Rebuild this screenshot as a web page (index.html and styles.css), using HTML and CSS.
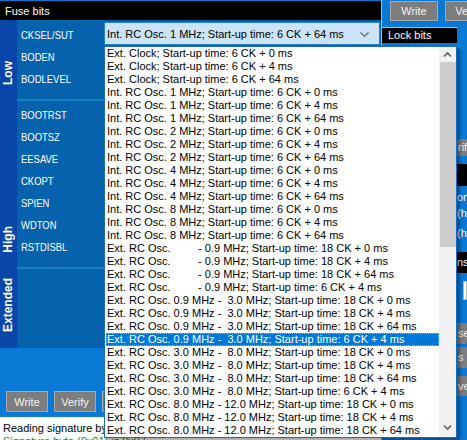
FILE: index.html
```html
<!DOCTYPE html>
<html>
<head>
<meta charset="utf-8">
<link rel="stylesheet" href="styles.css">
</head>
<body>
<div class="app">
  <div class="left">
    <div class="hdr">Fuse bits</div>
    <div class="fuse">
      <div class="sec">
        <div class="tab"><span>Low</span></div>
        <div class="body body-low">
          <div class="row"><span class="lbl"><span>CKSEL/SUT</span></span>
            <div class="combo"><span class="combo-txt">Int. RC Osc. 1 MHz; Start-up time: 6 CK + 64 ms</span>
              <svg class="chev" width="9" height="5" viewBox="0 0 9 5"><polyline points="0.5,0.5 4.5,4.3 8.5,0.5" fill="none" stroke="#5a5a5a" stroke-width="1.1"/></svg>
            </div>
          </div>
          <div class="row"><span class="lbl"><span>BODEN</span></span></div>
          <div class="row"><span class="lbl"><span>BODLEVEL</span></span></div>
        </div>
      </div>
      <div class="sec">
        <div class="tab"><span>High</span></div>
        <div class="body body-high">
          <div class="row"><span class="lbl"><span>BOOTRST</span></span></div>
          <div class="row"><span class="lbl"><span>BOOTSZ</span></span></div>
          <div class="row"><span class="lbl"><span>EESAVE</span></span></div>
          <div class="row"><span class="lbl"><span>CKOPT</span></span></div>
          <div class="row"><span class="lbl"><span>SPIEN</span></span></div>
          <div class="row"><span class="lbl"><span>WDTON</span></span></div>
          <div class="row"><span class="lbl"><span>RSTDISBL</span></span></div>
        </div>
      </div>
      <div class="sec">
        <div class="tab"><span>Extended</span></div>
        <div class="body body-ext"></div>
      </div>
    </div>
    <div class="actions">
      <button class="btn">Write</button>
      <button class="btn">Verify</button>
      <button class="btn">Read</button>
    </div>
    <div class="status">
      <div class="st-line">Reading signature byte (0x00) is 0x1E</div>
      <div class="st-line st-ok">Signature byte (0x01) is 0x07</div>
    </div>
  </div>

  <div class="right">
    <div class="rbtns">
      <button class="btn rbtn">Write</button>
      <button class="btn rbtn">Verify</button>
    </div>
    <div class="lockwrap">
      <div class="lockmain">
        <div class="lockhdr">Lock bits</div>
      </div>
      <div class="extra">
        <div class="x-gray x-b1">rify</div>
        <div class="x-black x-k1"></div>
        <div class="x-t x-t1">om</div>
        <div class="x-t x-t2">(he</div>
        <div class="x-t x-t3">(he</div>
        <div class="x-black x-k2">ns</div>
        <div class="x-white"></div>
        <div class="x-gray x-b2">se</div>
        <div class="x-gray x-b3">s (</div>
        <div class="x-gray x-b4">ve</div>
      </div>
    </div>
  </div>

  <div class="drop">
    <div class="items">
<div class="it">Ext. Clock; Start-up time: 6 CK + 0 ms</div>
<div class="it">Ext. Clock; Start-up time: 6 CK + 4 ms</div>
<div class="it">Ext. Clock; Start-up time: 6 CK + 64 ms</div>
<div class="it">Int. RC Osc. 1 MHz; Start-up time: 6 CK + 0 ms</div>
<div class="it">Int. RC Osc. 1 MHz; Start-up time: 6 CK + 4 ms</div>
<div class="it">Int. RC Osc. 1 MHz; Start-up time: 6 CK + 64 ms</div>
<div class="it">Int. RC Osc. 2 MHz; Start-up time: 6 CK + 0 ms</div>
<div class="it">Int. RC Osc. 2 MHz; Start-up time: 6 CK + 4 ms</div>
<div class="it">Int. RC Osc. 2 MHz; Start-up time: 6 CK + 64 ms</div>
<div class="it">Int. RC Osc. 4 MHz; Start-up time: 6 CK + 0 ms</div>
<div class="it">Int. RC Osc. 4 MHz; Start-up time: 6 CK + 4 ms</div>
<div class="it">Int. RC Osc. 4 MHz; Start-up time: 6 CK + 64 ms</div>
<div class="it">Int. RC Osc. 8 MHz; Start-up time: 6 CK + 0 ms</div>
<div class="it">Int. RC Osc. 8 MHz; Start-up time: 6 CK + 4 ms</div>
<div class="it">Int. RC Osc. 8 MHz; Start-up time: 6 CK + 64 ms</div>
<div class="it">Ext. RC Osc.         - 0.9 MHz; Start-up time: 18 CK + 0 ms</div>
<div class="it">Ext. RC Osc.         - 0.9 MHz; Start-up time: 18 CK + 4 ms</div>
<div class="it">Ext. RC Osc.         - 0.9 MHz; Start-up time: 18 CK + 64 ms</div>
<div class="it">Ext. RC Osc.         - 0.9 MHz; Start-up time: 6 CK + 4 ms</div>
<div class="it">Ext. RC Osc. 0.9 MHz -  3.0 MHz; Start-up time: 18 CK + 0 ms</div>
<div class="it">Ext. RC Osc. 0.9 MHz -  3.0 MHz; Start-up time: 18 CK + 4 ms</div>
<div class="it">Ext. RC Osc. 0.9 MHz -  3.0 MHz; Start-up time: 18 CK + 64 ms</div>
<div class="it sel">Ext. RC Osc. 0.9 MHz -  3.0 MHz; Start-up time: 6 CK + 4 ms</div>
<div class="it">Ext. RC Osc. 3.0 MHz -  8.0 MHz; Start-up time: 18 CK + 0 ms</div>
<div class="it">Ext. RC Osc. 3.0 MHz -  8.0 MHz; Start-up time: 18 CK + 4 ms</div>
<div class="it">Ext. RC Osc. 3.0 MHz -  8.0 MHz; Start-up time: 18 CK + 64 ms</div>
<div class="it">Ext. RC Osc. 3.0 MHz -  8.0 MHz; Start-up time: 6 CK + 4 ms</div>
<div class="it">Ext. RC Osc. 8.0 MHz - 12.0 MHz; Start-up time: 18 CK + 0 ms</div>
<div class="it">Ext. RC Osc. 8.0 MHz - 12.0 MHz; Start-up time: 18 CK + 4 ms</div>
<div class="it">Ext. RC Osc. 8.0 MHz - 12.0 MHz; Start-up time: 18 CK + 64 ms</div>
    </div>
    <div class="sb">
      <div class="sb-up"><svg width="17" height="15" viewBox="0 0 17 15"><polyline points="5,9.5 8.5,6 12,9.5" fill="none" stroke="#606060" stroke-width="1.6"/></svg></div>
      <div class="sb-thumb"></div>
      <div class="sb-track"></div>
      <div class="sb-down"><svg width="17" height="17" viewBox="0 0 17 17"><polyline points="5,5.5 8.5,9 12,5.5" fill="none" stroke="#606060" stroke-width="1.6"/></svg></div>
    </div>
  </div>
</div>
</body>
</html>
```

FILE: styles.css
```css
html, body {
  margin: 0;
  padding: 0;
}
body {
  width: 467px;
  height: 440px;
  overflow: hidden;
  background: #0a79d5;
  font-family: "Liberation Sans", Arial, sans-serif;
  font-size: 11px;
}
.app {
  position: relative;
  display: grid;
  grid-template-columns: 381px 86px;
  height: 440px;
  overflow: hidden;
}
.left {
  display: flex;
  flex-direction: column;
  min-width: 0;
}
.hdr {
  margin-top: 1px;
  height: 18px;
  padding-top: 1px;
  line-height: 18px;
  padding-left: 5px;
  background: #000;
  color: #fff;
}
.fuse {
  display: flex;
  flex-direction: column;
}
.sec {
  display: flex;
}
.tab {
  width: 17px;
  flex: none;
  background: #0846a9;
  display: flex;
  align-items: flex-end;
  justify-content: center;
  padding-bottom: 16px;
  box-sizing: border-box;
}
.tab span {
  writing-mode: vertical-rl;
  transform: rotate(180deg);
  font-weight: bold;
  font-size: 12px;
  color: #fff;
  line-height: 17px;
}
.body {
  flex: 1;
  background: #0762ad;
  box-sizing: border-box;
}
.body-low {
  padding: 4px 0 9px;
  border-bottom: 2px solid #1185c6;
}
.body-high {
  padding: 3px 0 9px;
  border-bottom: 2px solid #1185c6;
}
.body-ext {
  height: 79px;
}
.row {
  display: flex;
  height: 22px;
}
.lbl {
  width: 87px;
  flex: none;
  box-sizing: border-box;
  padding-left: 4px;
  line-height: 22px;
  color: #fff;
  white-space: nowrap;
}
.lbl span {
  display: inline-block;
  transform: scaleX(0.86);
  transform-origin: left center;
}
.combo {
  width: 276px;
  height: 23px;
  margin-top: -2px;
  box-sizing: border-box;
  border: 1px solid #2a7fcf;
  background: #cce4f7;
  display: flex;
  justify-content: space-between;
  padding-left: 2px;
  padding-top: 2px;
}
.combo-txt {
  line-height: 19px;
  color: #000;
  white-space: nowrap;
}
.chev {
  align-self: center;
  margin-top: 0px;
  margin-right: 10px;
}
.actions {
  margin-top: auto;
  display: flex;
  gap: 6px;
  padding-left: 6px;
  margin-bottom: 5px;
}
.btn {
  height: 21px;
  width: 42px;
  padding: 0;
  margin: 0;
  flex: none;
  background: #7d7d7d;
  border: 1px solid #a8a8a8;
  color: #f2f2f2;
  font-family: "Liberation Sans", Arial, sans-serif;
  font-size: 11px;
}
.status {
  height: 23px;
  box-sizing: border-box;
  background: #fff;
  padding: 5px 0 0 3px;
  overflow: hidden;
}
.st-line {
  line-height: 13px;
  white-space: nowrap;
  color: #000;
}
.st-ok {
  color: #0f8a0f;
}
.right {
  border-left: 1px solid #8fc4ee;
  display: flex;
  flex-direction: column;
  min-width: 0;
  overflow: hidden;
}
.rbtns {
  display: flex;
  gap: 7px;
  padding: 1px 0 0 8px;
}
.rbtn {
  width: 48px;
  height: 20px;
}
.lockwrap {
  display: flex;
  margin-top: 6px;
}
.lockmain {
  width: 75px;
  flex: none;
}
.lockhdr {
  border-top: 1px solid #8fc4ee;
  height: 15px;
  line-height: 15px;
  background: #000;
  color: #fff;
  padding-left: 6px;
  white-space: nowrap;
}
.extra {
  flex: 1;
  min-width: 0;
  display: flex;
  flex-direction: column;
  white-space: nowrap;
  overflow: hidden;
  color: #fff;
}
.x-gray {
  background: #7d7d7d;
  color: #f2ece6;
  padding-left: 1px;
}
.x-black {
  background: #000;
  color: #fff;
}
.x-b1 {
  margin-top: 112px;
  height: 17px;
  line-height: 17px;
}
.x-k1 {
  margin-top: 8px;
  height: 22px;
}
.x-t {
  line-height: 13px;
}
.x-t1 {
  margin-top: 5px;
  height: 16px;
}
.x-t2 {
  height: 20px;
}
.x-t3 {
  height: 13px;
}
.x-k2 {
  margin-top: 12px;
  height: 21px;
  line-height: 21px;
}
.x-white {
  margin-top: 8px;
  margin-left: 6px;
  height: 19px;
  background: #fff;
  border: 1px solid #b5b5b5;
  box-sizing: border-box;
}
.x-b2 {
  margin-top: 23px;
  height: 21px;
  line-height: 21px;
}
.x-b3 {
  margin-top: 3px;
  height: 21px;
  line-height: 21px;
}
.x-b4 {
  margin-top: 8px;
  height: 20px;
  line-height: 20px;
}
.drop {
  position: absolute;
  left: 104px;
  top: 46px;
  width: 353px;
  height: 392px;
  box-sizing: border-box;
  border: 1px solid #1c6cbd;
  background: #fff;
  display: flex;
  box-shadow: 3px 3px 3px rgba(0, 0, 0, 0.35);
}
.items {
  flex: 1;
  min-width: 0;
  padding-left: 1px;
}
.it {
  height: 13px;
  line-height: 13px;
  padding-left: 1px;
  white-space: pre;
  overflow: hidden;
  color: #000;
}
.it.sel {
  background: #0078d7;
  color: #fff;
  outline: 1px dotted #ff9a3c;
  outline-offset: -1px;
}
.sb {
  width: 17px;
  flex: none;
  display: flex;
  flex-direction: column;
  background: #f0f0f0;
}
.sb-up {
  height: 15px;
}
.sb-up svg, .sb-down svg {
  display: block;
}
.sb-thumb {
  height: 185px;
  margin-left: 1px;
  background: #cdcdcd;
}
.sb-track {
  flex: 1;
}
.sb-down {
  height: 17px;
}
```
